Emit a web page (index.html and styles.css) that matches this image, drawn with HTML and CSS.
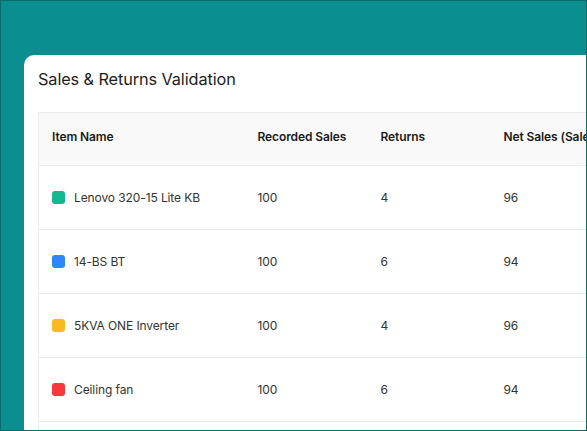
FILE: index.html
```html
<!DOCTYPE html>
<html>
<head>
<meta charset="utf-8">
<link rel="stylesheet" href="styles.css">
</head>
<body>
<div class="frame">
  <div class="card">
    <h1 class="title">Sales &amp; Returns Validation</h1>
    <table class="grid">
      <thead>
        <tr>
          <th class="c1">Item Name</th>
          <th class="c2">Recorded Sales</th>
          <th class="c3">Returns</th>
          <th class="c4">Net Sales (Sales - Returns)</th>
        </tr>
      </thead>
      <tbody>
        <tr>
          <td><span class="item"><span class="sw green"></span>Lenovo 320-15 Lite KB</span></td>
          <td>100</td><td>4</td><td>96</td>
        </tr>
        <tr>
          <td><span class="item"><span class="sw blue"></span>14-BS BT</span></td>
          <td>100</td><td>6</td><td>94</td>
        </tr>
        <tr>
          <td><span class="item"><span class="sw yellow"></span>5KVA ONE Inverter</span></td>
          <td>100</td><td>4</td><td>96</td>
        </tr>
        <tr>
          <td><span class="item"><span class="sw red"></span>Ceiling fan</span></td>
          <td>100</td><td>6</td><td>94</td>
        </tr>
        <tr class="more">
          <td></td><td></td><td></td><td></td>
        </tr>
      </tbody>
    </table>
  </div>
</div>
</body>
</html>
```
FILE: styles.css
```css
html, body {
  margin: 0;
  padding: 0;
}
body {
  width: 587px;
  height: 431px;
  overflow: hidden;
  font-family: Inter, "Liberation Sans", sans-serif;
}
.frame {
  box-sizing: border-box;
  width: 587px;
  height: 431px;
  border: 1px solid #0b6a6c;
  background: #0b8e8f;
  padding: 54px 0 0 23px;
  overflow: hidden;
}
.card {
  width: 720px;
  height: 440px;
  background: #ffffff;
  border-radius: 10px 0 0 0;
  padding: 12px 0 0 14px;
  box-sizing: border-box;
}
.title {
  margin: 0;
  font-size: 16.3px;
  line-height: 24px;
  font-weight: 400;
  color: #1c1c1c;
  letter-spacing: -0.1px;
}
.grid {
  margin-top: 21px;
  border-collapse: collapse;
  table-layout: fixed;
  width: 692px;
  border-left: 1px solid #ececec;
  border-top: 1px solid #ececec;
}
.grid th, .grid td {
  text-align: left;
  padding: 0 0 0 13px;
  white-space: nowrap;
  overflow: hidden;
  border-bottom: 1px solid #ececec;
  box-sizing: border-box;
}
.grid th {
  background: #f9f9f9;
  height: 53px;
  padding-bottom: 5px;
  font-size: 12px;
  font-weight: 600;
  color: #1a1a1a;
  letter-spacing: -0.1px;
}
.grid td {
  height: 64px;
  font-size: 12px;
  color: #333333;
  letter-spacing: -0.1px;
}
.c1 { width: 206px; }
.c2 { width: 123px; }
.c3 { width: 123px; }
.c4 { width: 240px; }
.item {
  display: flex;
  align-items: center;
  gap: 9px;
}
.sw {
  width: 13px;
  height: 13px;
  border-radius: 3px;
  flex: none;
}
.green { background: #13b890; }
.blue { background: #2f86fb; }
.yellow { background: #fbb921; }
.red { background: #f9383c; }
```
